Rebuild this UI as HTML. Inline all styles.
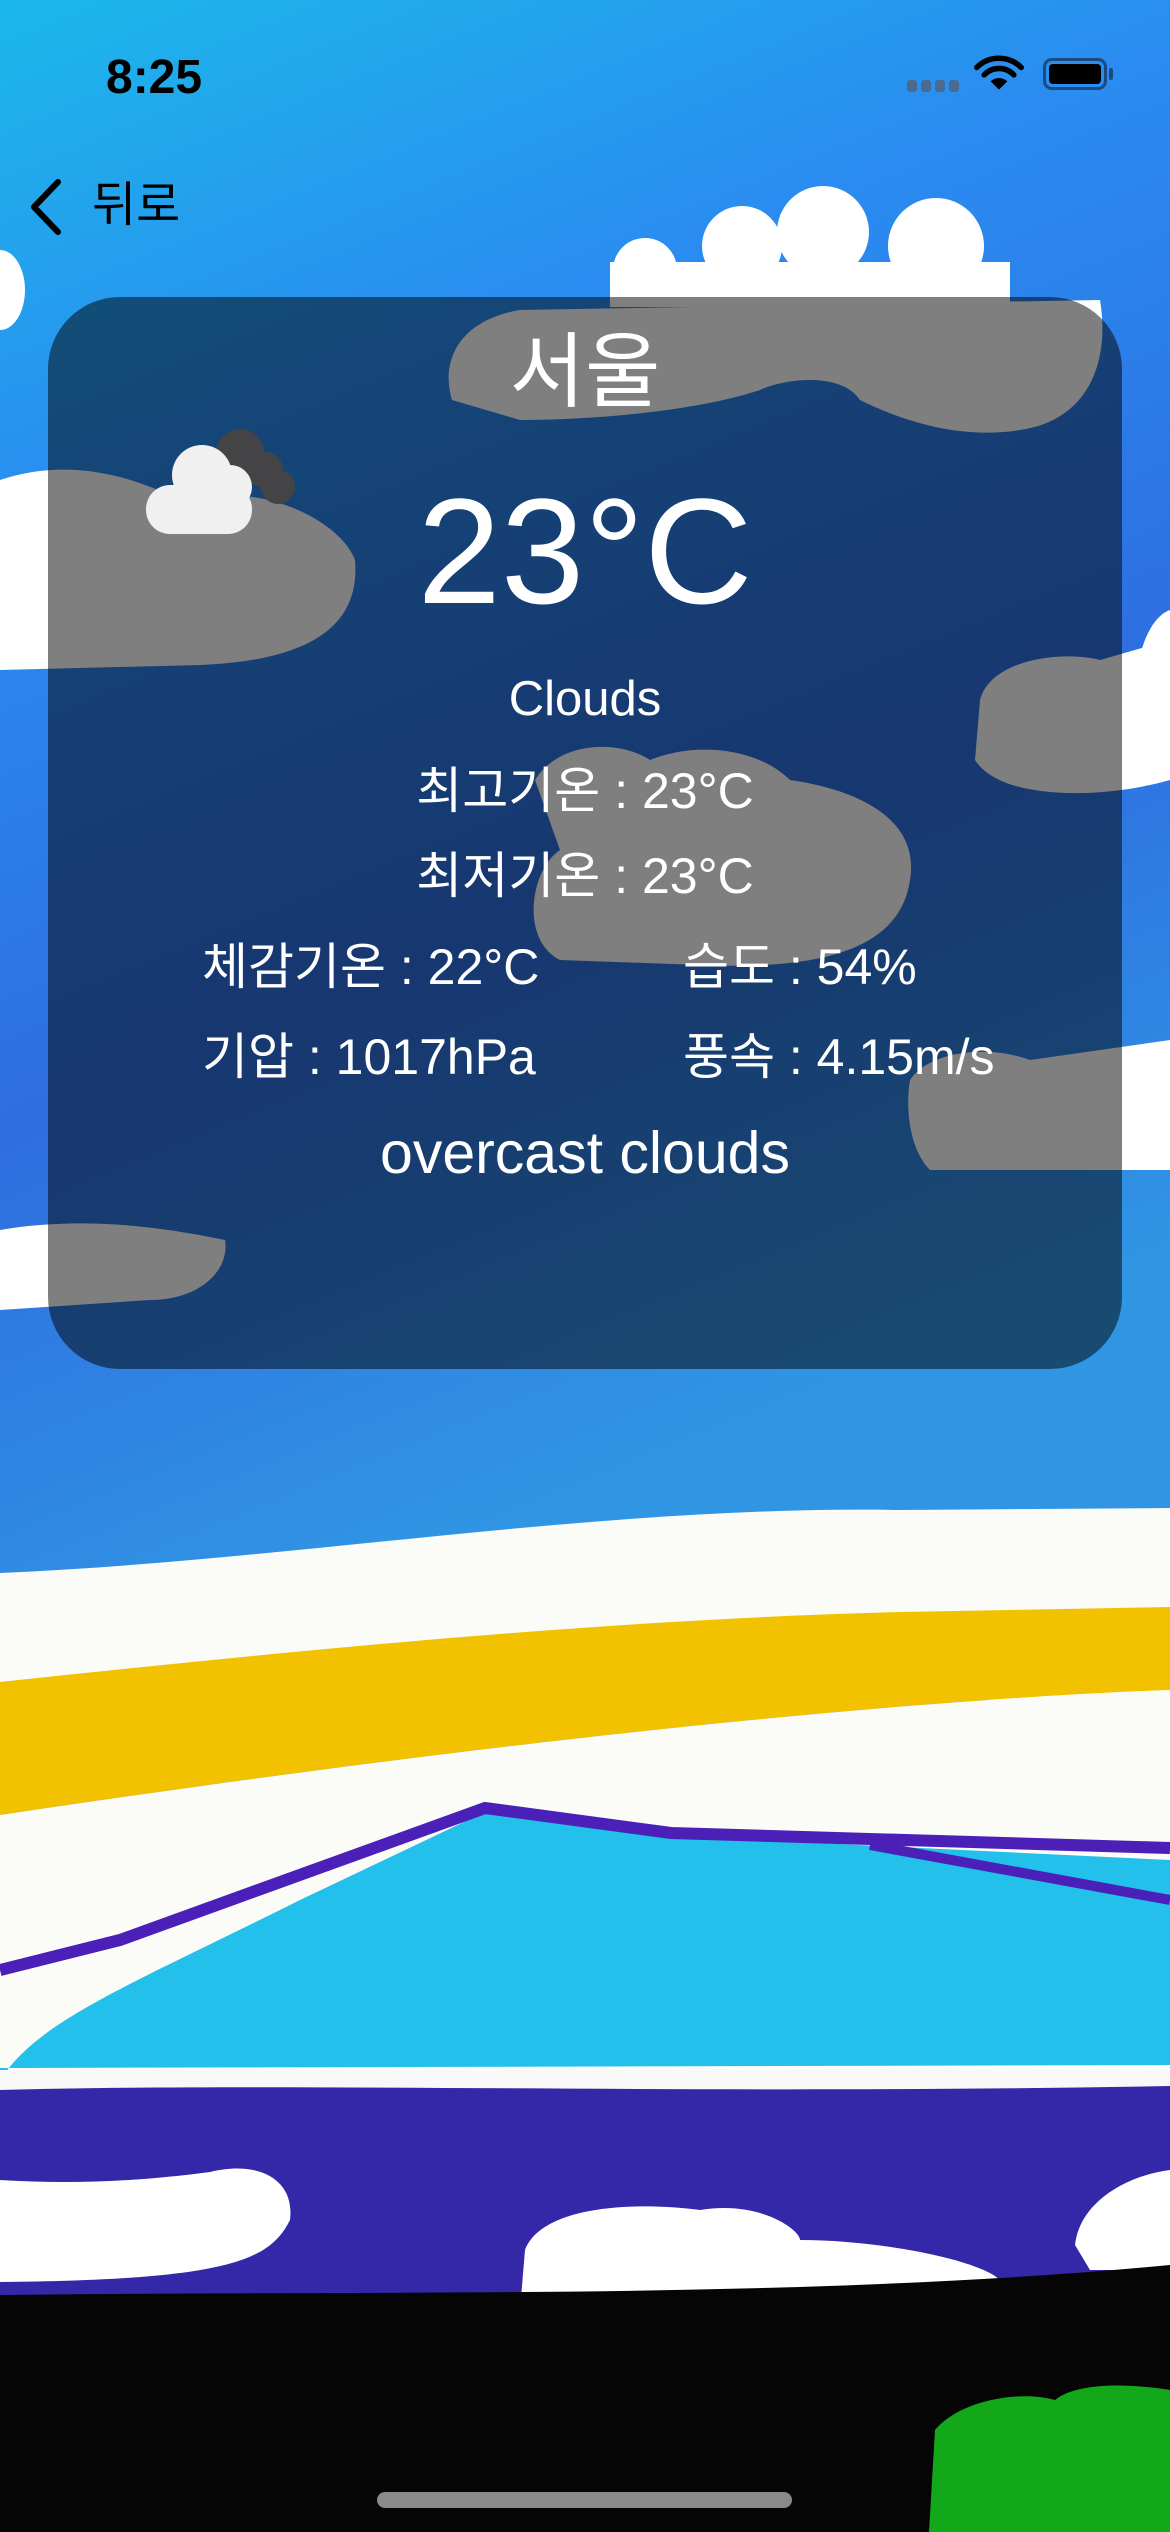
<!DOCTYPE html>
<html><head><meta charset="utf-8"><style>
*{margin:0;padding:0;box-sizing:border-box}
body{width:1170px;height:2532px;overflow:hidden;position:relative;font-family:"Liberation Sans","Noto Sans CJK KR",sans-serif;background:#2a80d8}
svg.bg{position:absolute;left:0;top:0}
.t{position:absolute;color:#fff;white-space:nowrap;line-height:1}
.c{left:0;width:1170px;text-align:center}
.card{position:absolute;left:48px;top:297px;width:1074px;height:1072px;border-radius:72px;background:rgba(0,0,0,0.5)}
</style></head><body>
<svg class="bg" width="1170" height="2532" viewBox="0 0 1170 2532">
<defs>
<linearGradient id="sky" x1="0" y1="0" x2="0.3" y2="1">
<stop offset="0" stop-color="#1cb8ea"/><stop offset="0.3" stop-color="#2a8cf0"/><stop offset="0.65" stop-color="#2e6ee0"/><stop offset="1" stop-color="#3096e4"/>
</linearGradient>
</defs>
<rect width="1170" height="1600" fill="url(#sky)"/>
<!-- top clouds -->
<g fill="#fff">
<circle cx="645" cy="270" r="32"/><circle cx="742" cy="246" r="40"/><circle cx="823" cy="232" r="46"/><circle cx="936" cy="246" r="48"/>
<rect x="610" y="262" width="400" height="45"/>
</g>
<ellipse cx="0" cy="290" rx="25" ry="40" fill="#fff"/>
<!-- clouds under card -->
<path d="M452 400 C440 360 460 320 520 310 L1100 300 C1110 360 1090 420 1020 430 C960 440 900 420 860 400 C840 370 780 380 760 390 C700 410 600 420 520 420 Z" fill="#fff"/>
<path d="M0 480 C60 460 120 470 180 500 C260 480 340 520 355 560 C360 620 320 660 200 665 L0 670 Z" fill="#fff"/>
<path d="M535 780 C560 740 620 740 650 760 C700 740 760 750 790 780 C860 790 920 820 910 880 C900 950 820 970 700 965 L560 960 C520 940 530 870 560 850 Z" fill="#fff"/>
<path d="M980 700 C990 660 1060 650 1100 660 L1170 640 L1170 780 C1100 800 1000 800 975 760 Z" fill="#fff"/>
<path d="M1170 610 C1140 620 1120 700 1150 770 L1170 775 Z" fill="#fff"/>
<path d="M910 1080 C930 1050 990 1045 1030 1060 L1170 1040 L1170 1170 L930 1170 C910 1150 905 1110 910 1080 Z" fill="#fff"/>
<path d="M0 1230 C60 1220 130 1220 225 1240 C230 1270 200 1300 150 1300 L0 1310 Z" fill="#fff"/>
<!-- lower bands -->
<path d="M0 1573 C300 1560 600 1505 900 1510 L1170 1508 L1170 1700 L0 1700 Z" fill="#fbfbf8"/>
<path d="M0 1682 C300 1650 600 1620 900 1612 L1170 1607 L1170 1690 C900 1700 500 1740 0 1815 Z" fill="#f2c200"/>
<path d="M0 1815 C500 1740 900 1700 1170 1690 L1170 2100 L0 2100 Z" fill="#fbfbf8"/>
<path d="M0 2080 C40 2020 120 1990 300 1900 L485 1812 L671 1836 L1170 1860 L1170 2065 L0 2068 Z" fill="#22c0ea"/>
<path d="M0 1970 L120 1940 L485 1808 L671 1833 L1170 1848" stroke="#4a20b8" stroke-width="12" fill="none"/>
<path d="M870 1845 L1170 1900" stroke="#4a20b8" stroke-width="10" fill="none"/>
<rect y="2070" width="1170" height="22" fill="#f8f8f8"/>
<path d="M0 2090 C300 2082 700 2095 1170 2086 L1170 2300 L0 2300 Z" fill="#3428a8"/>
<path d="M0 2180 C80 2185 150 2180 210 2172 C260 2160 295 2180 290 2220 C270 2260 230 2280 0 2282 Z" fill="#fff"/>
<path d="M525 2250 C540 2210 620 2200 700 2210 C760 2200 800 2230 800 2240 C880 2240 980 2260 1000 2280 L520 2310 Z" fill="#fff"/>
<path d="M1075 2245 C1080 2200 1130 2175 1170 2170 L1170 2270 L1090 2270 Z" fill="#fff"/>
<path d="M0 2295 C400 2290 800 2300 1170 2265 L1170 2532 L0 2532 Z" fill="#050505"/>
<path d="M929 2532 L935 2430 C960 2400 1020 2390 1055 2400 C1080 2380 1140 2385 1170 2390 L1170 2532 Z" fill="#12a81a"/>
<rect x="377" y="2492" width="415" height="16" rx="8" fill="#8a8a8a"/>
</svg>

<!-- status bar -->
<div class="t" style="left:106px;top:54px;font-size:48px;font-weight:bold;color:#000">8:25</div>
<div style="position:absolute;left:907px;top:80px;width:52px;height:12px;display:flex;gap:4px">
<div style="flex:1;background:#4a6a90;border-radius:3px"></div><div style="flex:1;background:#4a6a90;border-radius:3px"></div><div style="flex:1;background:#4a6a90;border-radius:3px"></div><div style="flex:1;background:#4a6a90;border-radius:3px"></div></div>
<svg style="position:absolute;left:974px;top:55px" width="50" height="36" viewBox="0 0 54 38">
<path d="M3 13 A34 34 0 0 1 51 13" stroke="#000" stroke-width="6" fill="none" stroke-linecap="round"/>
<path d="M11 21 A22 22 0 0 1 43 21" stroke="#000" stroke-width="6" fill="none" stroke-linecap="round"/>
<path d="M27 37 L18 28 A13 13 0 0 1 36 28 Z" fill="#000"/></svg>
<div style="position:absolute;left:1043px;top:58px;width:64px;height:32px;border:3px solid #1a4a80;border-radius:9px;padding:3px"><div style="width:100%;height:100%;background:#000;border-radius:4px"></div></div>
<div style="position:absolute;left:1109px;top:68px;width:4px;height:12px;background:#1a4a80;border-radius:2px"></div>

<!-- nav -->
<svg style="position:absolute;left:26px;top:178px" width="40" height="58" viewBox="0 0 40 58"><path d="M32 4 L8 29 L32 54" stroke="#000" stroke-width="6" fill="none" stroke-linecap="round" stroke-linejoin="round"/></svg>
<div class="t" style="left:92px;top:182px;font-size:48px;color:#000">뒤로</div>

<div class="card"></div>
<svg style="position:absolute;left:140px;top:425px" width="185" height="115" viewBox="0 0 185 115">
<g fill="#444446"><circle cx="100" cy="28" r="24"/><circle cx="125" cy="45" r="18"/><circle cx="138" cy="62" r="17"/></g>
<g fill="#f0f0f0"><circle cx="62" cy="50" r="30"/><circle cx="90" cy="62" r="22"/><rect x="6" y="60" width="106" height="49" rx="24"/></g>
</svg>
<div class="t c" style="top:332px;font-size:82px">서울</div>
<div class="t c" style="top:476px;font-size:150px">23°C</div>
<div class="t c" style="top:675px;font-size:49px">Clouds</div>
<div class="t c" style="top:766px;font-size:50px">최고기온 : 23°C</div>
<div class="t c" style="top:851px;font-size:50px">최저기온 : 23°C</div>
<div class="t" style="left:202px;top:942px;font-size:50px">체감기온 : 22°C</div>
<div class="t" style="left:683px;top:942px;font-size:50px">습도 : 54%</div>
<div class="t" style="left:202px;top:1032px;font-size:50px">기압 : 1017hPa</div>
<div class="t" style="left:683px;top:1032px;font-size:50px">풍속 : 4.15m/s</div>
<div class="t c" style="top:1124px;font-size:59px">overcast clouds</div>
</body></html>
